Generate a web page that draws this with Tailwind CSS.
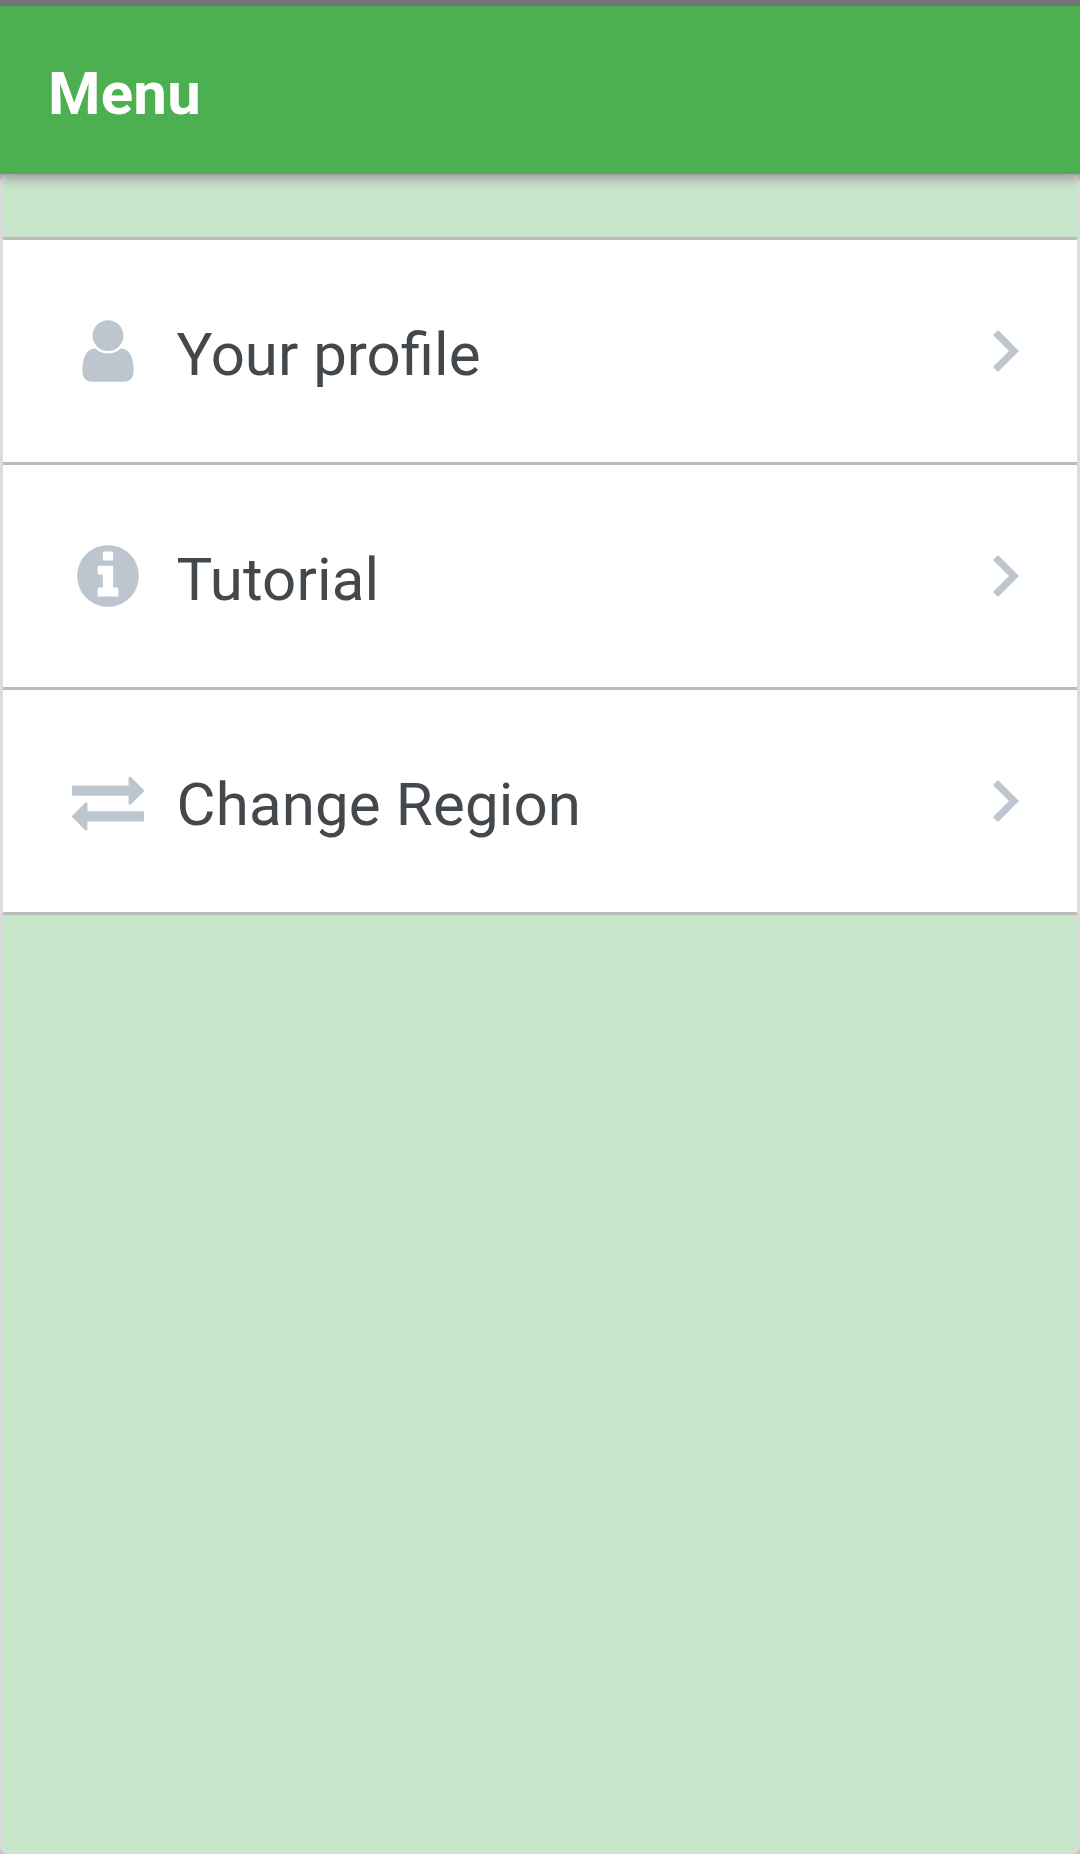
<!DOCTYPE html>
<html lang="en">
<head>
<meta charset="utf-8">
<title>Menu</title>
<script src="https://cdn.jsdelivr.net/npm/@tailwindcss/browser@4"></script>
</head>
<body class="flex h-[1854px] w-[1080px] flex-col overflow-hidden bg-[#c4c6cb] font-['Roboto',sans-serif]">
  <div class="z-20 h-1.5 shrink-0 bg-[#757575]"></div>
  <header class="z-10 flex h-42 shrink-0 items-center bg-[#4caf50] px-12 pt-[7px] shadow-[0_3px_12px_rgba(70,40,70,0.5)]">
    <h1 class="text-[60px] leading-[70px] font-bold tracking-[0.2px] text-white">Menu</h1>
  </header>
  <main class="flex-1 rounded-lg border-3 border-[#dcdcdc] bg-[#c8e6c9] pt-15">
    <ul class="divide-y-3 divide-[#bbbbbb] border-y-3 border-[#bbbbbb] bg-white text-[#43484d]">
      <li class="flex h-[225px] items-center pr-[58px] pl-[68.5px]">
        <svg class="size-[72px] fill-[#bdc6cf]" viewBox="0 0 1792 1792"><path d="M1536 1399q0 109-62.5 187t-150.5 78h-854q-88 0-150.5-78t-62.5-187q0-85 8.5-160.5t31.5-152 58.5-131 94-89 134.5-34.5q131 128 313 128t313-128q76 0 134.5 34.5t94 89 58.5 131 31.5 152 8.5 160.5zm-256-887q0 159-112.5 271.5t-271.5 112.5-271.5-112.5-112.5-271.5 112.5-271.5 271.5-112.5 271.5 112.5 112.5 271.5z"/></svg>
        <span class="ml-[33px] flex-1 pt-[7px] text-[60px] leading-[70px]">Your profile</span>
        <svg class="h-[42px] w-[26px] fill-[#bdc6cf]" viewBox="0 0 26 42"><path d="M5 0 0 5l16 16L0 37l5 5 21-21z"/></svg>
      </li>
      <li class="flex h-[225px] items-center pr-[58px] pl-[68.5px]">
        <svg class="size-[72px] fill-[#bdc6cf]" viewBox="0 0 1792 1792"><path d="M1152 1376v-160q0-14-9-23t-23-9h-96v-512q0-14-9-23t-23-9h-320q-14 0-23 9t-9 23v160q0 14 9 23t23 9h96v320h-96q-14 0-23 9t-9 23v160q0 14 9 23t23 9h448q14 0 23-9t9-23zm-128-896v-160q0-14-9-23t-23-9h-192q-14 0-23 9t-9 23v160q0 14 9 23t23 9h192q14 0 23-9t9-23zm640 416q0 209-103 385.5t-279.5 279.5-385.5 103-385.5-103-279.5-279.5-103-385.5 103-385.5 279.5-279.5 385.5-103 385.5 103 279.5 279.5 103 385.5z"/></svg>
        <span class="ml-[33px] flex-1 pt-[7px] text-[60px] leading-[70px] tracking-[0.15px]">Tutorial</span>
        <svg class="h-[42px] w-[26px] fill-[#bdc6cf]" viewBox="0 0 26 42"><path d="M5 0 0 5l16 16L0 37l5 5 21-21z"/></svg>
      </li>
      <li class="flex h-[222px] items-center pr-[58px] pl-[68.5px]">
        <svg class="size-[72px] fill-[#bdc6cf]" viewBox="0 0 1792 1792"><path d="M1792 1184v192q0 13-9.5 22.5t-22.5 9.5h-1376v192q0 13-9.5 22.5t-22.5 9.5q-12 0-24-10l-319-320q-9-9-9-22 0-14 9-23l320-320q9-9 23-9 13 0 22.5 9.5t9.5 22.5v192h1376q13 0 22.5 9.5t9.5 22.5zm0-544q0 14-9 23l-320 320q-9 9-23 9-13 0-22.5-9.5t-9.5-22.5v-192h-1376q-13 0-22.5-9.5t-9.5-22.5v-192q0-13 9.5-22.5t22.5-9.5h1376v-192q0-14 9-23t23-9q12 0 24 10l319 319q9 9 9 23z"/></svg>
        <span class="ml-[33px] flex-1 pt-[7px] text-[60px] leading-[70px] tracking-[0.15px]">Change Region</span>
        <svg class="h-[42px] w-[26px] fill-[#bdc6cf]" viewBox="0 0 26 42"><path d="M5 0 0 5l16 16L0 37l5 5 21-21z"/></svg>
      </li>
    </ul>
  </main>
</body>
</html>
